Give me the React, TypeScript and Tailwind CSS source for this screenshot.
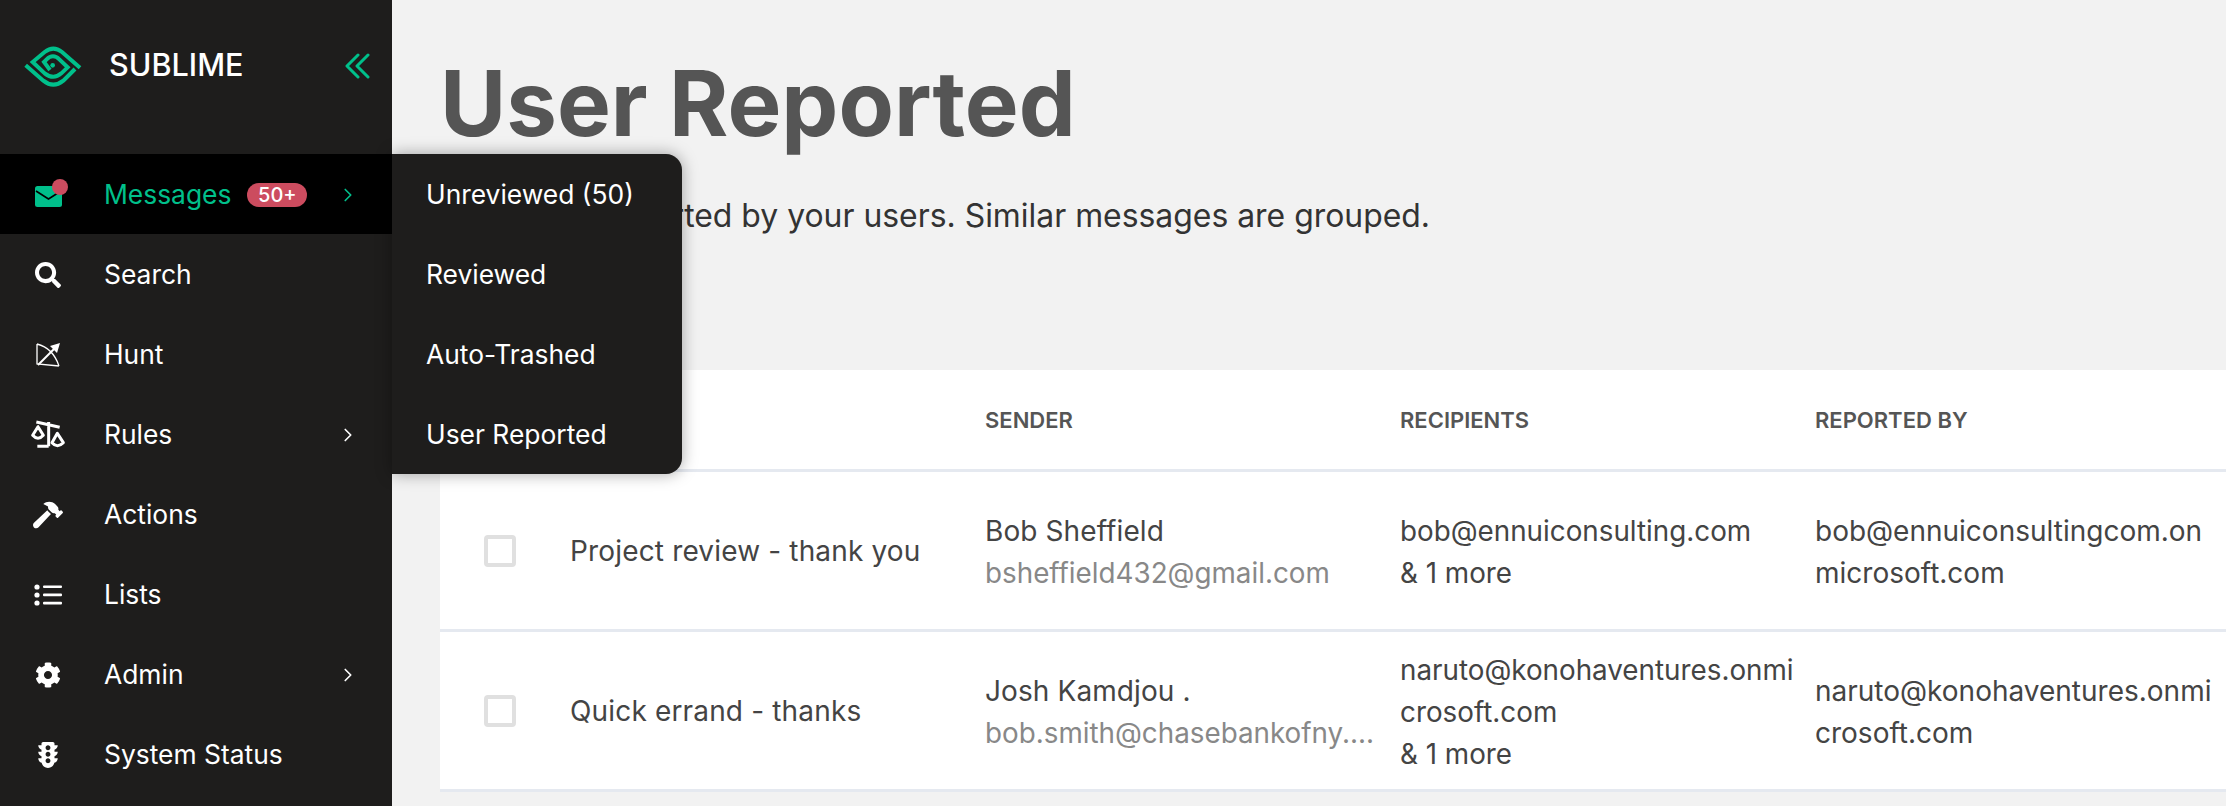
import { ChevronRight } from 'lucide-react'
import { FaCog, FaHammer, FaSearch, FaTrafficLight } from 'react-icons/fa'

const FONT = { fontFamily: 'Inter, "Liberation Sans", sans-serif' }

function Logo() {
  return (
    <svg width="70" height="50" viewBox="0 0 210 150" fill="none" stroke="#00c08b" strokeWidth="12">
      <path d="M180 83 L126 36 C108 22 92 22 74 36 L38 66 L74 100 C92 114 108 114 124 100 L143 82 L118 58 C106 46 92 46 80 58 L72 66 L90 90" />
      <path d="M17 76 L70 122 C90 138 110 138 130 122 L165 87" />
      <circle cx="98" cy="76" r="7" fill="#00c08b" stroke="none" />
    </svg>
  )
}

function CollapseIcon() {
  return (
    <svg width="26" height="26" viewBox="0 0 26 26" fill="none" stroke="#00c08b" strokeWidth="3" strokeLinecap="round" strokeLinejoin="round">
      <path d="M14 2 L3 13 L14 24 M24 2 L13 13 L24 24" />
    </svg>
  )
}

function MailIcon() {
  return (
    <div className="relative -mt-[4px] h-[28px] w-[36px]">
      <svg className="absolute left-0 top-[7px]" width="27" height="21" viewBox="0 0 27 21">
        <rect width="27" height="21" rx="2.5" fill="#00c08b" />
        <path d="M1 5 L13.5 13 L26 5" fill="none" stroke="#000" strokeWidth="1.6" />
      </svg>
      <span className="absolute left-[17px] top-0 h-4 w-4 rounded-full bg-[#cc4c5f]" />
    </div>
  )
}

function BowIcon() {
  return (
    <svg width="26" height="26" viewBox="0 0 26 26" fill="none" stroke="#fff">
      <path d="M2 2 L2 22 L24 24 M2 2 Q18 6 24 24" strokeWidth="1.3" />
      <path d="M3 23 L21 5" strokeWidth="2" />
      <path d="M25 1 L15 4 L22 11 Z" fill="#fff" stroke="none" />
    </svg>
  )
}

function ScaleIcon() {
  return (
    <svg width="50" height="50" viewBox="-5 -14 150 150" fill="none" stroke="#fff" strokeWidth="9" strokeLinejoin="round">
      <path d="M35 22 L105 38 M72 22 V95 M38 95 H72" />
      <path d="M40 36 L24 62 Q40 80 56 62 Z M98 56 L82 84 Q98 102 116 84 Z" />
    </svg>
  )
}

function ListIcon() {
  return (
    <svg width="28" height="22" viewBox="0 0 28 22" fill="#fff">
      <circle cx="3" cy="3" r="2.6" />
      <circle cx="3" cy="11" r="2.6" />
      <circle cx="3" cy="19" r="2.6" />
      <rect x="9" y="1.4" width="19" height="2.6" rx="1" />
      <rect x="9" y="9.6" width="19" height="2.6" rx="1" />
      <rect x="9" y="17.8" width="19" height="2.6" rx="1" />
    </svg>
  )
}

const navItems = [
  { label: 'Search', icon: <FaSearch size={26} /> },
  { label: 'Hunt', icon: <BowIcon /> },
  { label: 'Rules', icon: <ScaleIcon />, more: true },
  { label: 'Actions', icon: <FaHammer size={30} /> },
  { label: 'Lists', icon: <ListIcon /> },
  { label: 'Admin', icon: <FaCog size={26} />, more: true },
  { label: 'System Status', icon: <FaTrafficLight size={26} /> },
]

const subItems = ['Unreviewed (50)', 'Reviewed', 'Auto-Trashed', 'User Reported']

const rows = [
  {
    subject: 'Project review - thank you',
    name: 'Bob Sheffield',
    email: 'bsheffield432@gmail.com',
    recipients: ['bob@ennuiconsulting.com', '& 1 more'],
    reporter: 'bob@ennuiconsultingcom.onmicrosoft.com',
  },
  {
    subject: 'Quick errand - thanks',
    name: 'Josh Kamdjou .',
    email: 'bob.smith@chasebankofny....',
    recipients: ['naruto@konohaventures.onmicrosoft.com', '& 1 more'],
    reporter: 'naruto@konohaventures.onmicrosoft.com',
  },
]

const COLS = 'grid grid-cols-[130px_415px_415px_415px_1fr] items-center'

export default function App() {
  return (
    <div className="flex h-screen overflow-hidden bg-[#f2f2f2]" style={FONT}>
      {/* Sidebar */}
      <aside className="relative z-10 w-[392px] shrink-0 bg-[#1e1d1c] text-white">
        <div className="flex h-[154px] items-start pl-5 pr-[22px] pt-10">
          <Logo />
          <span className="ml-[19px] mt-[7px] text-[30.6px] font-medium leading-[36px]">SUBLIME</span>
          <div className="ml-auto mt-[13px]"><CollapseIcon /></div>
        </div>

        <div className="flex h-20 items-center bg-black pt-[2px] text-[#00c08b]">
          <div className="ml-[35px] w-[69px]"><MailIcon /></div>
          <span className="text-[26.4px]">Messages</span>
          <span className="ml-4 flex h-6 w-[60px] items-center justify-center rounded-full bg-[#cc4c5f] text-[20px] font-medium text-white">50+</span>
          <ChevronRight className="ml-auto mr-[33px]" size={22} strokeWidth={1.8} />
        </div>

        {navItems.map((item) => (
          <div key={item.label} className="flex h-20 items-center pt-[2px] text-[26.4px]">
            <div className="flex w-[104px] justify-center pr-[8px]">{item.icon}</div>
            <span>{item.label}</span>
            {item.more && <ChevronRight className="ml-auto mr-[33px]" size={22} strokeWidth={1.8} />}
          </div>
        ))}

        {/* Flyout */}
        <div className="absolute left-[392px] top-[154px] w-[290px] rounded-r-2xl bg-[#1e1d1c] shadow-[0_0_16px_rgba(0,0,0,0.35)]">
          {subItems.map((label) => (
            <div key={label} className="flex h-20 items-center pl-[34px] pt-[2px] text-[26.4px]">{label}</div>
          ))}
        </div>
      </aside>

      {/* Main */}
      <main className="min-w-0 flex-1 pl-[48px]">
        <h1 className="mt-[48px] text-[90.5px] font-bold leading-[110px] text-[#555]">User Reported</h1>
        <p className="mt-[36px] text-[31.9px] leading-[44px] text-[#333]">Messages reported by your users. Similar messages are grouped.</p>

        <section className="mt-[132px] bg-white text-[#444]">
          <div className={`${COLS} h-[102px] border-b-[3px] border-[#e5e9f0] pt-[2px] text-[22px] font-semibold uppercase text-[#555]`}>
            <div />
            <div>Subject</div>
            <div>Sender</div>
            <div>Recipients</div>
            <div>Reported by</div>
          </div>
          {rows.map((row) => (
            <div key={row.subject} className={`${COLS} h-[160px] border-b-[3px] border-[#e5e9f0] text-[28px] leading-[42px]`}>
              <div className="pl-[44px]">
                <div className="h-8 w-8 rounded-[4px] border-[4px] border-[#e0e0e0]" />
              </div>
              <div className="tracking-[0.16px]">{row.subject}</div>
              <div className="pr-[24px] pt-[2px]">
                <div className="tracking-[0.1px]">{row.name}</div>
                <div className="text-[27.8px] text-[#888]">{row.email}</div>
              </div>
              <div className="pr-[12px] pt-[2px] text-[27.8px] wrap-anywhere">
                {row.recipients.map((r) => <div key={r}>{r}</div>)}
              </div>
              <div className="pr-[12px] pt-[2px] wrap-anywhere">{row.reporter}</div>
            </div>
          ))}
        </section>
      </main>
    </div>
  )
}
